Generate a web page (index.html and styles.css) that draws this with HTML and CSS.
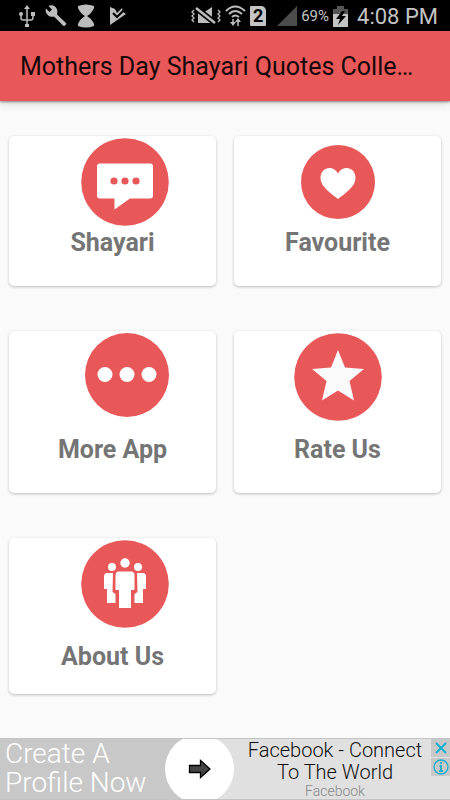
FILE: index.html
```html
<!DOCTYPE html>
<html lang="en">
<head>
<meta charset="utf-8">
<meta name="viewport" content="width=device-width, initial-scale=1">
<title>Mothers Day Shayari Quotes</title>
<link rel="stylesheet" href="styles.css">
</head>
<body>
<header class="status">
  <div class="status-left">
    <svg width="16" height="24" viewBox="0 0 16 24" fill="none" stroke="#bdbdbd" stroke-width="1.5"><path d="M8 4v18M2 10v4q0 2 2 2h8q2 0 2-3v-2"/><path d="M8 1l3 4H5zM6 20h4v3H6zM12 8h4v4h-4z" fill="#bdbdbd" stroke="none"/><circle cx="2" cy="10" r="2" fill="#bdbdbd" stroke="none"/></svg>
    <svg width="22" height="22" viewBox="0 0 22 22"><path fill="#bdbdbd" d="M21 18L12 9.500C13 6 12 3 10 1.500 8 0 5 0 3.500 1L7 4.500 4.500 7 1 3.500C0 6 1 8.500 3 10.200 5 12 7.500 12 9 11.500L18 20.500q1 1 2 0l1-1q.8-.8 0-1.500z"/></svg>
    <svg width="18" height="24" viewBox="0 0 18 24"><path fill="#bdbdbd" d="M1 2q8-3 16 0v2q-2 5-7 8 5 3 7 8v2q-8 3-16 0v-2q2-5 7-8Q3 9 1 4z"/></svg>
    <svg width="17" height="20" viewBox="0 0 17 20"><path fill="#bdbdbd" d="M1 1l5 2 2 4 5-5 1 4 3 2L1 19z"/><path d="M4 7l4 4 7-7" fill="none" stroke="#000" stroke-width="2"/></svg>
  </div>
  <div class="status-right">
    <svg width="30" height="20" viewBox="0 0 30 20"><path fill="#bdbdbd" d="M7 7h5l9-6v16H7z"/><path d="M5 2l19 15" stroke="#000" stroke-width="6"/><path d="M5 2l19 15" stroke="#bdbdbd" stroke-width="2.500"/><path d="M3 4l-2 2 2 2-2 2 2 2-2 2 2 2M27 4l2 2-2 2 2 2-2 2 2 2-2 2" fill="none" stroke="#bdbdbd" stroke-width="1.300"/></svg>
    <svg class="wifi" width="21" height="22" viewBox="0 0 21 22" fill="none" stroke="#bdbdbd" stroke-width="2"><path d="M1 6q9-9 19 0M4 9q6-6 13 0M7 12q3-3 7 0"/><path d="M8 14v5M13 21v-5" stroke-width="1.500"/><path d="M5 17h6l-3 4zM10 17h6l-3-4z" fill="#bdbdbd" stroke="none"/></svg>
    <span class="sim">2</span>
    <svg class="signal" width="20" height="20" viewBox="0 0 20 20"><path fill="#4c4c4c" d="M20 0v20H0z"/></svg>
    <span class="percent">69%</span>
    <svg class="battery" width="15" height="21" viewBox="0 0 15 21"><path fill="#555" d="M4 0h7v3h4v5H0V3h4z"/><path fill="#c4c4c4" d="M0 8h15v13H0z"/><path fill="#000" d="M9 5l-6 8h4l-2 6 8-9H9l3-5z"/></svg>
    <time class="clock">4:08 PM</time>
  </div>
</header>

<div class="appbar"><h1>Mothers Day Shayari Quotes Colle…</h1></div>

<main class="menu">
  <a class="card shifted" href="#shayari">
    <svg class="icon" viewBox="0 0 88 88"><circle class="disc" cx="44" cy="44" r="43.800"/><path fill="#fff" d="M19 25.500h50q3 0 3 3v29q0 3-3 3H49L33.500 71.500v-11H19q-3 0-3-3v-29q0-3 3-3z"/><g class="disc"><circle cx="33" cy="43" r="3.600"/><circle cx="44" cy="43" r="3.600"/><circle cx="55" cy="43" r="3.600"/></g></svg>
    <span class="label">Shayari</span>
  </a>
  <a class="card" href="#favourite">
    <svg class="icon" viewBox="0 0 88 88"><circle class="disc" cx="44" cy="44" r="37"/><path fill="#fff" d="M44 61C38 56 26.500 49 26.500 40 26.500 29 39 26.500 44 35.500 49 26.500 61.500 29 61.500 40 61.500 49 50 56 44 61z"/></svg>
    <span class="label">Favourite</span>
  </a>
  <a class="card spaced shifted" href="#more">
    <svg class="icon" viewBox="0 0 88 88"><circle class="disc" cx="46" cy="42" r="42"/><g fill="#fff"><circle cx="24" cy="41.500" r="7.500"/><circle cx="46" cy="41.500" r="7.500"/><circle cx="68" cy="41.500" r="7.500"/></g></svg>
    <span class="label">More App</span>
  </a>
  <a class="card spaced" href="#rate">
    <svg class="icon" viewBox="0 0 88 88"><circle class="disc" cx="44" cy="44" r="43.800"/><path fill="#fafafa" d="M44 17l7 17.500 19 1.500-14.500 12L60 67.500 44 57.500 28 67.500 32.500 48 18 36l19-1.500z"/></svg>
    <span class="label">Rate Us</span>
  </a>
  <a class="card spaced compact shifted" href="#about">
    <svg class="icon" viewBox="0 0 88 88"><circle class="disc" cx="44" cy="44" r="43.800"/><g fill="#fff"><circle cx="31" cy="27" r="4"/><circle cx="57" cy="27" r="4"/><circle cx="44" cy="23" r="4.700"/><path d="M26 33h6l-.5 19 3 2v9h-8.500V49h-3V37q0-4 3-4zM62 33h-6l.5 19-3 2v9H62V49h3V37q0-4-3-4zM38 31.500h12q3.500 0 3.500 4V50H50v18H38V50h-3.500V35.500q0-4 3.500-4z"/></g></svg>
    <span class="label">About Us</span>
  </a>
</main>

<aside class="ad">
  <a class="ad-pitch" href="#ad">Create A<br>Profile Now</a>
  <div class="ad-go"><svg width="70" height="60" viewBox="0 0 70 60"><circle cx="34.500" cy="30" r="34.500" fill="#fff"/><path d="M24.500 26.500h11v-5L45 30l-9.500 8.500v-5h-11z" fill="#444" stroke="#000" stroke-width="1.300"/></svg></div>
  <div class="ad-copy"><span class="ad-title">Facebook - Connect<br>To The World</span><span class="ad-source">Facebook</span></div>
  <div class="ad-tools">
    <button type="button" aria-label="Close ad"><svg width="14" height="14" viewBox="0 0 14 14"><path d="M2 2l10 10M12 2L2 12"/></svg></button>
    <button type="button" aria-label="Ad information"><svg width="16" height="16" viewBox="0 0 16 16"><circle cx="8" cy="8" r="7" stroke-width="1.300"/><path d="M8 3v2M6.500 7H8v5M6 12h4" stroke-width="1.800"/></svg></button>
  </div>
</aside>
</body>
</html>
```
FILE: styles.css
```css
* { box-sizing: border-box; }

body {
  margin: 0;
  min-height: 100vh;
  display: flex;
  flex-direction: column;
  background: #fafafa;
  font-family: Roboto, "Liberation Sans", sans-serif;
}

svg { display: block; flex: none; }
a { color: inherit; text-decoration: none; }

.status {
  height: 31px;
  padding: 1px 12px 0 19px;
  display: flex;
  justify-content: space-between;
  align-items: center;
  background: #000;
  color: #c4c4c4;
}
.status-left, .status-right { display: flex; align-items: center; }
.status-left { gap: 10px; }
.status-left svg:last-child { margin-left: 4px; }
.wifi { margin-left: 4px; }
.sim {
  width: 16px;
  height: 20px;
  margin-left: 4px;
  background: #c4c4c4;
  color: #000;
  font-size: 18px;
  font-weight: 700;
  line-height: 20px;
  text-align: center;
  border-radius: 1px 5px 1px 1px;
}
.signal { margin-left: 11px; }
.percent { margin-left: 4px; font-size: 15px; }
.battery { margin-left: 4px; }
.clock { margin-left: 9px; font-size: 22px; }

.appbar {
  height: 70px;
  padding: 2px 20px 0;
  display: flex;
  align-items: center;
  background: #e95858;
  box-shadow: 0 1px 2px rgba(0, 0, 0, 0.4), 0 3px 8px rgba(0, 0, 0, 0.15);
}
.appbar h1 {
  margin: 0;
  white-space: nowrap;
  color: #160808;
  font-size: 25px;
  font-weight: 400;
  line-height: 32px;
}

.menu {
  flex: 1;
  display: grid;
  grid-template-columns: 1fr 1fr;
  align-content: start;
  gap: 45px 18px;
  padding: 35px 9px 44px;
}
.card {
  display: flex;
  flex-direction: column;
  align-items: center;
  gap: 2px;
  padding: 2px 0 28px;
  background: #fff;
  border-radius: 5px;
  box-shadow: 0 1px 3px rgba(0, 0, 0, 0.25);
}
.spaced { gap: 14px; }
.compact { padding-bottom: 22px; }
.icon { width: 88px; height: 88px; }
.shifted .icon { margin-left: 25px; }
.disc { fill: #e95858; }
.label {
  color: #757575;
  font-size: 25px;
  font-weight: 700;
  line-height: 30px;
}

.ad {
  height: 62px;
  display: grid;
  grid-template-columns: 165px 70px 1fr 19px;
  background: linear-gradient(90deg, #c8c8c8 200px, #e0e0e0 200px);
  border-top: 1px solid #c4c4c4;
  border-bottom: 1px solid #c4c4c4;
}
.ad-pitch {
  padding-left: 5px;
  color: #fff;
  font-size: 28px;
  font-weight: 300;
  line-height: 29px;
  white-space: nowrap;
}
.ad-copy {
  display: flex;
  flex-direction: column;
  padding-left: 4px;
  text-align: center;
  color: #111;
  font-weight: 300;
  white-space: nowrap;
}
.ad-title { font-size: 20px; line-height: 22px; }
.ad-source { color: #888; font-size: 14px; line-height: 16px; }
.ad-tools { display: flex; flex-direction: column; gap: 1px; }
.ad-tools button {
  width: 19px;
  height: 18px;
  padding: 0;
  border: 0;
  display: flex;
  align-items: center;
  justify-content: center;
  background: #c8c8c8;
}
.ad-tools svg { fill: none; stroke: #12afd0; stroke-width: 2; }
```
